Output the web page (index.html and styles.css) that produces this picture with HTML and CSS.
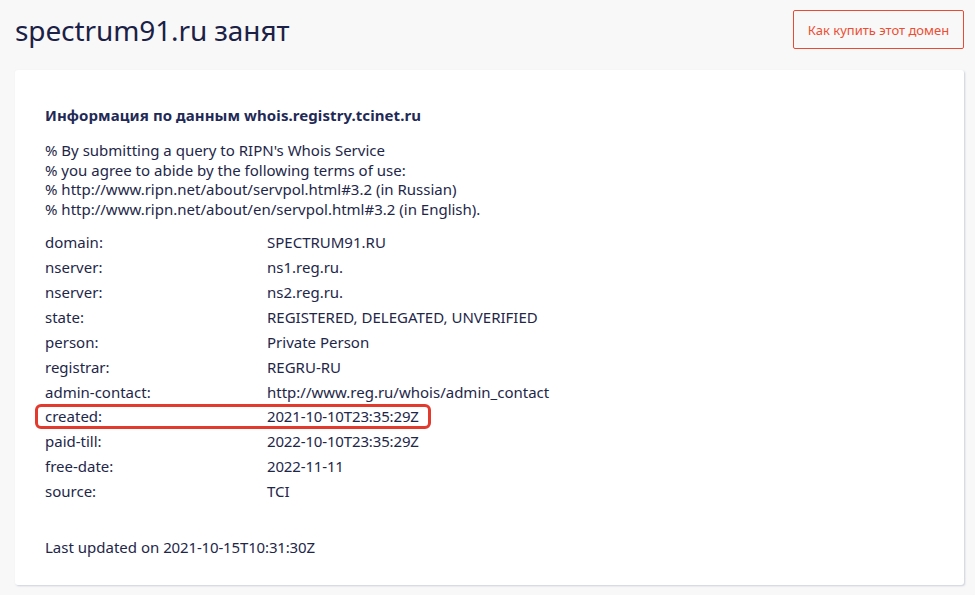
FILE: index.html
```html
<!DOCTYPE html>
<html lang="ru">
<head>
<meta charset="utf-8">
<title>spectrum91.ru занят</title>
<link rel="stylesheet" href="styles.css">
</head>
<body>
<header class="top">
  <h1 class="title">spectrum91.ru занят</h1>
  <a class="buy-btn" href="#">Как купить этот домен</a>
</header>
<main class="card">
  <h2 class="source-title">Информация по данным whois.registry.tcinet.ru</h2>
  <div class="notice">
    <div>% By submitting a query to RIPN's Whois Service</div>
    <div>% you agree to abide by the following terms of use:</div>
    <div>% http://www.ripn.net/about/servpol.html#3.2 (in Russian)</div>
    <div>% http://www.ripn.net/about/en/servpol.html#3.2 (in English).</div>
  </div>
  <div class="whois">
    <div class="row"><span class="key">domain:</span><span class="val">SPECTRUM91.RU</span></div>
    <div class="row"><span class="key">nserver:</span><span class="val">ns1.reg.ru.</span></div>
    <div class="row"><span class="key">nserver:</span><span class="val">ns2.reg.ru.</span></div>
    <div class="row"><span class="key">state:</span><span class="val">REGISTERED, DELEGATED, UNVERIFIED</span></div>
    <div class="row"><span class="key">person:</span><span class="val">Private Person</span></div>
    <div class="row"><span class="key">registrar:</span><span class="val">REGRU-RU</span></div>
    <div class="row"><span class="key">admin-contact:</span><span class="val">http://www.reg.ru/whois/admin_contact</span></div>
    <div class="row highlighted"><span class="key">created:</span><span class="val num">2021-10-10T23:35:29Z</span></div>
    <div class="row"><span class="key">paid-till:</span><span class="val num">2022-10-10T23:35:29Z</span></div>
    <div class="row"><span class="key">free-date:</span><span class="val num">2022-11-11</span></div>
    <div class="row"><span class="key">source:</span><span class="val">TCI</span></div>
  </div>
  <p class="updated">Last updated on <span class="num">2021-10-15T10:31:30Z</span></p>
</main>
</body>
</html>
```
FILE: styles.css
```css
html, body {
  margin: 0;
  padding: 0;
}
body {
  background: #f8f8f8;
  font-family: "Noto Sans", "Open Sans", "DejaVu Sans", sans-serif;
  color: #1e2749;
  width: 975px;
  height: 595px;
  overflow: hidden;
}
.top {
  display: flex;
  justify-content: space-between;
  align-items: flex-start;
  padding: 10px 11px 0 15px;
  height: 60px;
  box-sizing: border-box;
}
.title {
  margin: 0;
  font-size: 28px;
  font-weight: 400;
  line-height: 40px;
  color: #1b2146;
  letter-spacing: -0.1px;
}
.buy-btn {
  display: flex;
  align-items: center;
  justify-content: center;
  height: 39px;
  width: 171px;
  box-sizing: border-box;
  border: 1px solid #e94a33;
  border-radius: 2px;
  color: #ec4e33;
  font-size: 13px;
  text-decoration: none;
}
.card {
  margin: 10px 11px 0 15px;
  background: #fff;
  border-radius: 3px;
  box-shadow: 1px 1px 2px rgba(120, 130, 170, 0.35);
  padding: 35px 30px 28px 30px;
  height: 515px;
  box-sizing: border-box;
}
.source-title {
  margin: 0;
  font-size: 15px;
  font-weight: 700;
  line-height: 20px;
  color: #1f2a56;
  letter-spacing: 0.08px;
}
.notice {
  margin-top: 16px;
  font-size: 15px;
  line-height: 19.7px;
}
.whois {
  margin-top: 10px;
  font-size: 15px;
}
.row {
  display: flex;
  height: 24.9px;
  align-items: center;
  position: relative;
}
.key {
  width: 222px;
  flex: none;
}
.num {
  letter-spacing: -0.15px;
}
.highlighted::after {
  content: "";
  position: absolute;
  left: -10px;
  top: 0;
  width: 396px;
  height: 25px;
  box-sizing: border-box;
  border: 3px solid #e23a2d;
  border-radius: 6px;
}
.updated {
  margin: 33px 0 0 0;
  font-size: 15px;
  line-height: 20px;
}
```
